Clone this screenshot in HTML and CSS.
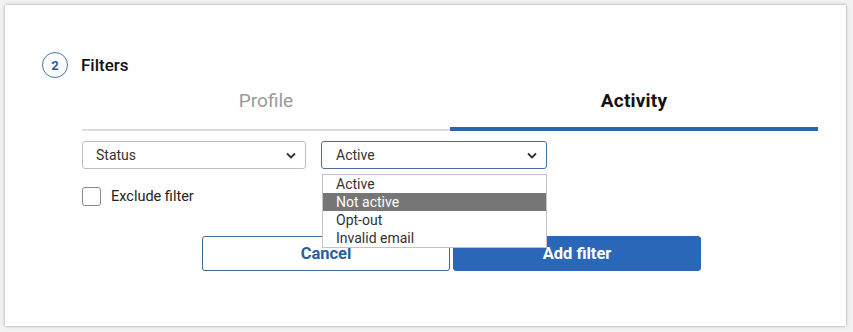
FILE: index.html
```html
<!DOCTYPE html>
<html lang="en">
<head>
    <meta charset="UTF-8">
    <title>Filters</title>
    <link rel="stylesheet" href="styles.css">
</head>
<body>
    <div class="card">
        <!-- Cabeçalho do passo -->
        <div class="step-header">
            <span class="step-number">2</span>
            <span class="step-title">Filters</span>
        </div>

        <div class="content">
            <div class="tabs">
                <div class="tab">Profile</div>
                <div class="tab active">Activity</div>
            </div>

            <div class="filter-row">
                <div class="select">
                    <span>Status</span>
                    <svg class="chevron" width="10" height="7" viewBox="0 0 10 7"><path d="M1 1.5l4 4 4-4" fill="none" stroke="#333" stroke-width="1.8"/></svg>
                </div>
                <div class="select-wrap">
                    <div class="select focused">
                        <span>Active</span>
                        <svg class="chevron" width="10" height="7" viewBox="0 0 10 7"><path d="M1 1.5l4 4 4-4" fill="none" stroke="#333" stroke-width="1.8"/></svg>
                    </div>
                    <ul class="dropdown">
                        <li>Active</li>
                        <li class="hover">Not active</li>
                        <li>Opt-out</li>
                        <li>Invalid email</li>
                    </ul>
                </div>
            </div>

            <label class="checkbox-row">
                <span class="checkbox"></span>
                <span>Exclude filter</span>
            </label>

            <div class="actions">
                <button class="btn-cancel">Cancel</button>
                <button class="btn-add">Add filter</button>
            </div>
        </div>
    </div>
</body>
</html>
```

FILE: styles.css
```css
body {
    margin: 0;
    font-family: Roboto, "Liberation Sans", sans-serif;
    background-color: #f2f2f2;
    color: #222;
}

.card {
    margin: 5px;
    width: 841px;
    height: 321px;
    box-sizing: border-box;
    background-color: #ffffff;
    box-shadow: 0 0 3px rgba(0, 0, 0, 0.35);
    padding-top: 47px;
}

.step-header {
    display: flex;
    align-items: center;
    gap: 13px;
    margin-left: 37px;
    height: 26px;
}

.step-number {
    width: 24px;
    height: 24px;
    border: 1.5px solid #4c76a6;
    border-radius: 50%;
    display: flex;
    justify-content: center;
    align-items: center;
    font-size: 13px;
    font-weight: 700;
    color: #2b5f99;
}

.step-title {
    font-size: 17px;
    font-weight: 500;
    color: #111;
}

.content {
    margin-left: 77px;
    width: 736px;
}

.tabs {
    display: flex;
    align-items: flex-end;
    margin-top: 5px;
}

.tab {
    flex: 1;
    text-align: center;
    font-size: 19px;
    line-height: 18px;
    color: #999;
    padding: 9px 0 19px;
    border-bottom: 2px solid #dcdcdc;
}

.tab.active {
    color: #111;
    font-weight: 700;
    letter-spacing: 0.2px;
    padding-bottom: 17px;
    border-bottom: 4px solid #2b66ab;
}

.filter-row {
    display: flex;
    gap: 15px;
    margin-top: 10px;
}

.select {
    width: 224px;
    height: 28px;
    box-sizing: border-box;
    border: 1px solid #bdbdbd;
    border-radius: 3px;
    display: flex;
    align-items: center;
    justify-content: space-between;
    padding: 0 9px 0 13px;
    font-size: 14px;
    color: #333;
}

.select-wrap {
    position: relative;
}

.select.focused {
    width: 226px;
    border: 1.5px solid #4a6e96;
    padding-left: 14px;
}

.dropdown {
    position: absolute;
    top: 33px;
    left: 1px;
    width: 225px;
    box-sizing: border-box;
    margin: 0;
    padding: 0;
    list-style: none;
    background-color: #fff;
    border: 1px solid #c4c4c4;
    font-size: 14px;
    color: #333;
}

.dropdown li {
    line-height: 18px;
    padding-left: 13px;
}

.dropdown li.hover {
    background-color: #767676;
    color: #fff;
}

.checkbox-row {
    display: flex;
    align-items: center;
    gap: 10px;
    margin-top: 18px;
    font-size: 14.5px;
    color: #222;
}

.checkbox {
    width: 19px;
    height: 19px;
    box-sizing: border-box;
    border: 1px solid #8a8a8a;
    border-radius: 3px;
}

.actions {
    display: flex;
    justify-content: center;
    gap: 3px;
    margin-top: 30px;
    padding-left: 3px;
}

.actions button {
    width: 248px;
    height: 35px;
    font-family: Roboto, "Liberation Sans", sans-serif;
    font-size: 16.5px;
    font-weight: 700;
    border-radius: 3px;
    cursor: pointer;
}

.btn-cancel {
    background-color: #fff;
    color: #2d5e94;
    border: 1px solid #3f6a96;
}

.btn-add {
    background-color: #2a67b8;
    color: #fff;
    border: 1px solid #2a67b8;
}
```
